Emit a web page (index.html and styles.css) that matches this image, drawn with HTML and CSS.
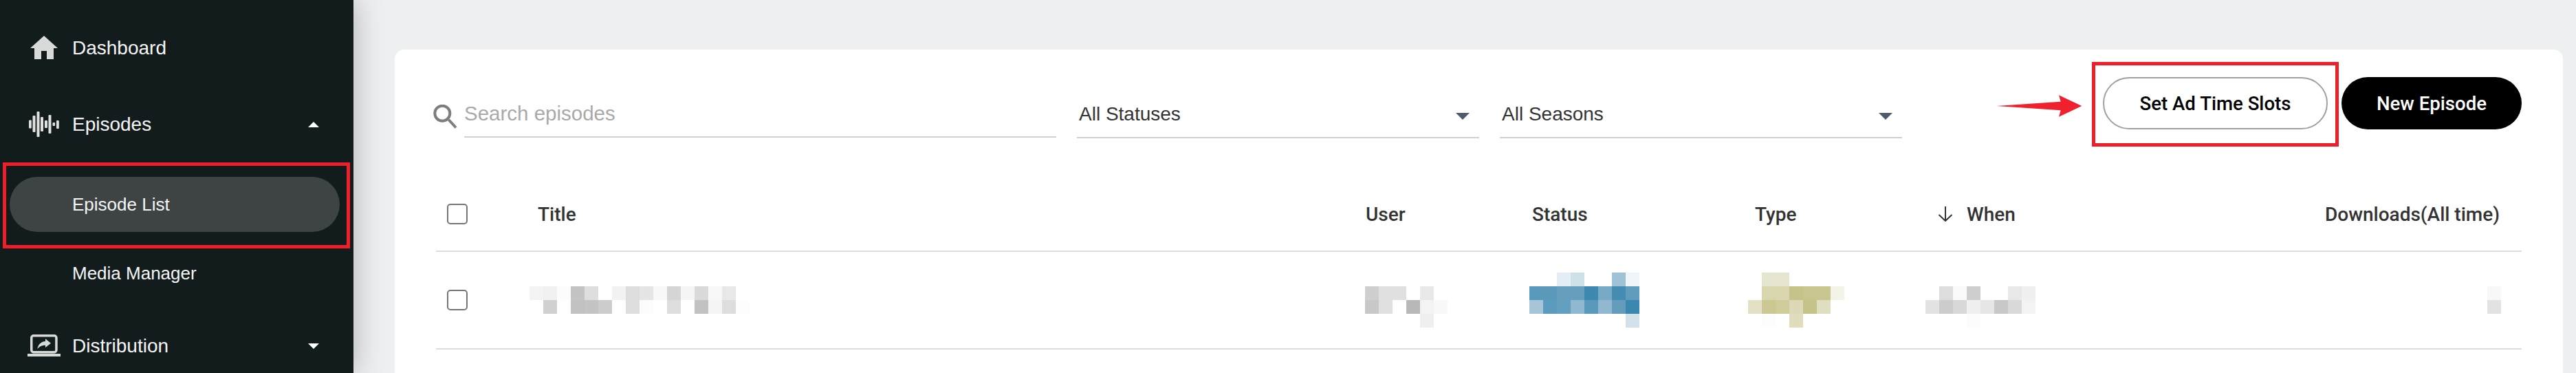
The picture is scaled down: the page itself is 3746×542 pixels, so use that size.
FILE: index.html
```html
<!DOCTYPE html>
<html lang="en">
<head>
    <meta charset="UTF-8">
    <meta name="viewport" content="width=device-width, initial-scale=1.0">
    <title>Episode List</title>
    <link rel="stylesheet" href="styles.css">
</head>
<body>
    <aside class="sidebar">
        <a class="nav-item nav-first">
            <svg class="nav-icon" width="48" height="34" viewBox="-4 0 48 34"><path d="M20 0L40 18H34V34H24V22H16V34H6V18H0Z" fill="#d8dada"/></svg>
            <span>Dashboard</span>
        </a>
        <a class="nav-item">
            <svg class="nav-icon" width="48" height="37" viewBox="40 161 48 37" fill="#dfe0df">
                <rect x="42" y="173.5" width="3.8" height="12" rx="1"/>
                <rect x="47.5" y="167" width="4" height="24" rx="1"/>
                <rect x="53.5" y="161" width="4" height="37" rx="1"/>
                <rect x="59" y="169" width="4" height="21" rx="1"/>
                <rect x="65" y="174" width="4" height="11" rx="1"/>
                <rect x="70.5" y="166" width="4" height="27" rx="1"/>
                <rect x="76.5" y="177" width="3.6" height="5" rx="1"/>
                <rect x="82" y="174" width="3.8" height="12" rx="1"/>
            </svg>
            <span>Episodes</span>
            <i class="caret caret-up"></i>
        </a>
        <div class="subnav">
            <a class="sub-item active">Episode List</a>
            <a class="sub-item">Media Manager</a>
        </div>
        <a class="nav-item">
            <svg class="nav-icon" width="48" height="32" viewBox="0 0 48 32">
                <rect x="5.75" y="1.75" width="36.2" height="24" rx="3" fill="none" stroke="#d8dada" stroke-width="3.5"/>
                <rect x="0" y="28" width="48" height="4" fill="#d8dada"/>
                <path d="M26 6.3L34 12.7L26 19V15.7C21 15.7 17.5 17 14.3 21.3C15.5 15 19 10.5 26 10Z" fill="#d8dada"/>
            </svg>
            <span>Distribution</span>
            <i class="caret caret-down"></i>
        </a>
    </aside>

    <main class="main">
        <section class="card">
            <div class="toolbar">
                <div class="search">
                    <svg class="search-icon" width="36" height="36" viewBox="0 0 36 36" fill="none" stroke="#7d7d7d" stroke-width="4">
                        <circle cx="13.3" cy="12.7" r="11"/>
                        <line x1="22.5" y1="22" x2="33" y2="33.5"/>
                    </svg>
                    <input class="search-input" type="text" placeholder="Search episodes">
                </div>
                <div class="filter"><span>All Statuses</span><i class="filter-arrow"></i></div>
                <div class="filter"><span>All Seasons</span><i class="filter-arrow"></i></div>
                <div class="actions">
                    <button class="btn btn-outline" type="button">Set Ad Time Slots</button>
                    <button class="btn btn-black" type="button">New Episode</button>
                </div>
            </div>

            <div class="table">
                <div class="row head">
                    <div class="cell"><span class="check"></span></div>
                    <div class="cell">Title</div>
                    <div class="cell">User</div>
                    <div class="cell">Status</div>
                    <div class="cell">Type</div>
                    <div class="cell">
                        <svg class="sort-arrow" width="22" height="22" viewBox="0 0 22 22" fill="none" stroke="#333" stroke-width="2"><path d="M11 0V21M1.5 12L11 21L20.5 12"/></svg>
                        When
                    </div>
                    <div class="cell cell-right">Downloads(All time)</div>
                </div>
                <div class="row body">
                    <div class="cell"><span class="check"></span></div>
                    <div class="cell">
                        <!-- blurred out in the original -->
                        <svg class="mosaic mosaic-title" width="320" height="80" viewBox="0 0 16 4" shape-rendering="crispEdges">
                            <rect x="0" y="1" width="1" height="1" fill="#f3f3f3"/><rect x="1" y="1" width="1" height="1" fill="#f1f1f1"/><rect x="2" y="1" width="1" height="1" fill="#fcfcfc"/><rect x="3" y="1" width="1" height="1" fill="#c4c4c4"/><rect x="4" y="1" width="1" height="1" fill="#dedede"/><rect x="6" y="1" width="1" height="1" fill="#f2f2f2"/><rect x="7" y="1" width="1" height="1" fill="#dddddd"/><rect x="8" y="1" width="1" height="1" fill="#e5e5e5"/><rect x="9" y="1" width="1" height="1" fill="#f8f8f8"/><rect x="10" y="1" width="1" height="1" fill="#d5d5d5"/><rect x="11" y="1" width="1" height="1" fill="#f5f5f5"/><rect x="12" y="1" width="1" height="1" fill="#dadada"/><rect x="13" y="1" width="1" height="1" fill="#f8f8f8"/><rect x="14" y="1" width="1" height="1" fill="#e8e8e8"/>
                            <rect x="1" y="2" width="1" height="1" fill="#d0d0d0"/><rect x="3" y="2" width="1" height="1" fill="#c2c2c2"/><rect x="4" y="2" width="1" height="1" fill="#c4c4c4"/><rect x="5" y="2" width="1" height="1" fill="#cccccc"/><rect x="7" y="2" width="1" height="1" fill="#dddddd"/><rect x="8" y="2" width="1" height="1" fill="#fcfcfc"/><rect x="10" y="2" width="1" height="1" fill="#dddddd"/><rect x="12" y="2" width="1" height="1" fill="#c2c2c2"/><rect x="13" y="2" width="1" height="1" fill="#f5f5f5"/><rect x="14" y="2" width="1" height="1" fill="#dddddd"/><rect x="15" y="2" width="1" height="1" fill="#fdfdfd"/>
                        </svg>
                    </div>
                    <div class="cell">
                        <svg class="mosaic mosaic-user" width="120" height="80" viewBox="0 0 6 4" shape-rendering="crispEdges">
                            <rect x="0" y="1" width="1" height="1" fill="#cfcfcf"/><rect x="1" y="1" width="2" height="1" fill="#e0e0e0"/><rect x="4" y="1" width="1" height="1" fill="#e8e8e8"/>
                            <rect x="0" y="2" width="1" height="1" fill="#c8c8c8"/><rect x="1" y="2" width="1" height="1" fill="#e0e0e0"/><rect x="3" y="2" width="1" height="1" fill="#b8b8b8"/><rect x="4" y="2" width="1" height="1" fill="#f3f3f3"/><rect x="5" y="2" width="1" height="1" fill="#f8f8f8"/>
                            <rect x="4" y="3" width="1" height="1" fill="#efefef"/>
                        </svg>
                    </div>
                    <div class="cell">
                        <svg class="mosaic mosaic-status" width="160" height="80" viewBox="0 0 8 4" shape-rendering="crispEdges">
                            <rect x="2" y="0" width="1" height="1" fill="#e6eef5"/><rect x="3" y="0" width="1" height="1" fill="#d0e0e9"/><rect x="6" y="0" width="1" height="1" fill="#a0c2d5"/><rect x="7" y="0" width="1" height="1" fill="#f0f5fa"/>
                            <rect x="0" y="1" width="1" height="1" fill="#5899bc"/><rect x="1" y="1" width="1" height="1" fill="#5a99b9"/><rect x="2" y="1" width="1" height="1" fill="#669ebd"/><rect x="3" y="1" width="1" height="1" fill="#669ebd"/><rect x="4" y="1" width="1" height="1" fill="#3f89b1"/><rect x="5" y="1" width="1" height="1" fill="#78a9c6"/><rect x="6" y="1" width="1" height="1" fill="#448cb2"/><rect x="7" y="1" width="1" height="1" fill="#5f9cbd"/>
                            <rect x="0" y="2" width="1" height="1" fill="#a6c5d9"/><rect x="1" y="2" width="1" height="1" fill="#5b9bbd"/><rect x="2" y="2" width="1" height="1" fill="#659fbf"/><rect x="3" y="2" width="1" height="1" fill="#90b8d0"/><rect x="4" y="2" width="1" height="1" fill="#5899bc"/><rect x="5" y="2" width="1" height="1" fill="#90b8d0"/><rect x="6" y="2" width="1" height="1" fill="#659bbb"/><rect x="7" y="2" width="1" height="1" fill="#3b87af"/>
                            <rect x="7" y="3" width="1" height="1" fill="#d2e1e9"/>
                        </svg>
                    </div>
                    <div class="cell">
                        <svg class="mosaic mosaic-type" width="140" height="80" viewBox="0 0 7 4" shape-rendering="crispEdges">
                            <rect x="1" y="0" width="2" height="1" fill="#e6e6d0"/>
                            <rect x="1" y="1" width="1" height="1" fill="#d8d6ac"/><rect x="2" y="1" width="1" height="1" fill="#d9d6af"/><rect x="3" y="1" width="1" height="1" fill="#c6c38a"/><rect x="4" y="1" width="1" height="1" fill="#c8c58e"/><rect x="5" y="1" width="1" height="1" fill="#c8c58e"/><rect x="6" y="1" width="1" height="1" fill="#f3f3e8"/>
                            <rect x="0" y="2" width="1" height="1" fill="#e2e0c5"/><rect x="1" y="2" width="1" height="1" fill="#cbc893"/><rect x="2" y="2" width="1" height="1" fill="#cfcc9b"/><rect x="3" y="2" width="1" height="1" fill="#dcd9b6"/><rect x="4" y="2" width="1" height="1" fill="#c6c38a"/><rect x="5" y="2" width="1" height="1" fill="#e0dec0"/>
                            <rect x="1" y="3" width="1" height="1" fill="#fdfdfb"/><rect x="3" y="3" width="1" height="1" fill="#e0dcbc"/>
                        </svg>
                    </div>
                    <div class="cell">
                        <svg class="mosaic mosaic-when" width="160" height="80" viewBox="0 0 8 4" shape-rendering="crispEdges">
                            <rect x="1" y="1" width="1" height="1" fill="#dddddd"/><rect x="2" y="1" width="1" height="1" fill="#fafafa"/><rect x="3" y="1" width="1" height="1" fill="#cfcfcf"/><rect x="6" y="1" width="1" height="1" fill="#e8e8e8"/><rect x="7" y="1" width="1" height="1" fill="#f0f0f0"/>
                            <rect x="0" y="2" width="1" height="1" fill="#e2e2e2"/><rect x="1" y="2" width="1" height="1" fill="#cccccc"/><rect x="2" y="2" width="1" height="1" fill="#d8d8d8"/><rect x="3" y="2" width="1" height="1" fill="#f0f0f0"/><rect x="4" y="2" width="1" height="1" fill="#e6e6e6"/><rect x="5" y="2" width="1" height="1" fill="#c8c8c8"/><rect x="6" y="2" width="1" height="1" fill="#dadada"/><rect x="7" y="2" width="1" height="1" fill="#f3f3f3"/>
                            <rect x="3" y="3" width="1" height="1" fill="#fcfcfc"/>
                        </svg>
                    </div>
                    <div class="cell cell-right">
                        <svg class="mosaic mosaic-downloads" width="20" height="80" viewBox="0 0 1 4" shape-rendering="crispEdges">
                            <rect x="0" y="1" width="1" height="1" fill="#f8f8f8"/><rect x="0" y="2" width="1" height="1" fill="#e2e2e2"/>
                        </svg>
                    </div>
                </div>
            </div>
        </section>
    </main>

    <!-- red annotations drawn over the screenshot -->
    <div class="mark mark-nav"></div>
    <div class="mark mark-btn"></div>
    <svg class="mark-arrow" width="126" height="32" viewBox="2902 138 126 32"><path d="M2903.3 154L2996.7 147.7L2994 138.3L3027.3 154L2994 169.7L2996.7 160.3Z" fill="#f0212d"/></svg>
</body>
</html>
```

FILE: styles.css
```css
* {
    box-sizing: border-box;
}
body {
    font-family: "Liberation Sans", Arial, sans-serif;
    background-color: #eeeff1;
    margin: 0;
    height: 100vh;
    display: flex;
    overflow: hidden;
}
.sidebar {
    width: 514px;
    flex-shrink: 0;
    padding-top: 13px;
    background-color: #131c1c;
    color: #f4f5f5;
    box-shadow: 0 0 40px rgba(0, 0, 0, 0.28);
    position: relative;
}
.nav-item {
    height: 112px;
    padding-left: 40px;
    display: flex;
    align-items: center;
    gap: 17px;
    font-size: 28px;
}
.nav-first {
    padding-top: 2px;
}
.nav-icon {
    flex-shrink: 0;
    margin-top: -2px;
}
.caret {
    margin-left: auto;
    margin-right: 50px;
    border-left: 8px solid transparent;
    border-right: 8px solid transparent;
}
.caret-up {
    border-bottom: 8px solid #ffffff;
}
.caret-down {
    border-top: 8px solid #ffffff;
}
.subnav {
    padding: 20px 20px 10px 14px;
    display: flex;
    flex-direction: column;
    gap: 20px;
}
.sub-item {
    height: 80px;
    padding-left: 91px;
    border-radius: 40px;
    display: flex;
    align-items: center;
    font-size: 26px;
}
.sub-item.active {
    background-color: #3e4444;
}
.main {
    flex: 1;
    min-width: 0;
    padding: 72px 19px 0 60px;
    display: flex;
}
.card {
    flex: 1;
    min-width: 0;
    padding: 40px 60px 0;
    background-color: #ffffff;
    border-radius: 14px 14px 0 0;
}
.toolbar {
    display: flex;
    align-items: flex-start;
    color: #333333;
}
.search {
    display: flex;
    align-items: flex-start;
    margin-left: -4px;
    margin-right: 30px;
}
.search-icon {
    margin-top: 40px;
    margin-right: 9px;
    flex-shrink: 0;
}
.search-input {
    width: 861px;
    height: 88px;
    padding: 20px 0 0;
    border: none;
    border-bottom: 2px solid #d0d0d0;
    outline: none;
    background: none;
    font-family: inherit;
    font-size: 29.5px;
    color: #333333;
}
.search-input::placeholder {
    color: #a9a9a9;
    opacity: 1;
}
.filter {
    width: 585px;
    height: 89px;
    margin-right: 30px;
    padding: 21px 14px 0 3px;
    border-bottom: 2px solid #d0d0d0;
    display: flex;
    align-items: center;
    justify-content: space-between;
    font-size: 28px;
}
.filter-arrow {
    margin-top: 6px;
    border-left: 10px solid transparent;
    border-right: 10px solid transparent;
    border-top: 10px solid #4f5b6b;
}
.actions {
    margin-left: auto;
    display: flex;
    gap: 20px;
}
.btn {
    height: 76px;
    border-radius: 38px;
    font-family: Roboto, sans-serif;
    font-size: 27.6px;
    font-weight: 500;
}
.btn-outline {
    width: 327px;
    background-color: #ffffff;
    border: 2px solid #a0a0a0;
    color: #000000;
}
.btn-black {
    width: 262px;
    background-color: #000000;
    border: none;
    color: #ffffff;
}
.table {
    margin-top: 57px;
}
.row {
    display: grid;
    grid-template-columns: 148px 1204px 242px 324px 266px 300px 1fr;
    border-bottom: 2px solid #dddddd;
}
.head {
    height: 108px;
    font-family: Roboto, sans-serif;
    font-size: 28px;
    font-weight: 500;
    color: #333333;
}
.body {
    height: 142px;
}
.cell {
    display: flex;
    align-items: center;
}
.cell-right {
    justify-content: flex-end;
    padding-right: 32px;
}
.body .cell-right {
    padding-right: 30px;
}
.check {
    width: 30px;
    height: 30px;
    margin-left: 16px;
    border: 2px solid #757575;
    border-radius: 5px;
}
.sort-arrow {
    margin-right: 20px;
}
.mosaic {
    flex-shrink: 0;
}
.mosaic-title {
    margin-left: -12px;
}
.mosaic-user {
    margin-left: -1px;
}
.mosaic-status {
    margin-left: -4px;
}
.mosaic-type {
    margin-left: -10px;
}
.mosaic-when {
    margin-left: -18px;
}
.mark {
    position: absolute;
    border: 5px solid #ee1f2b;
}
.mark-nav {
    left: 4px;
    top: 236px;
    width: 505px;
    height: 125px;
}
.mark-btn {
    left: 3042px;
    top: 90px;
    width: 359px;
    height: 123px;
}
.mark-arrow {
    position: absolute;
    left: 2902px;
    top: 138px;
}
```
